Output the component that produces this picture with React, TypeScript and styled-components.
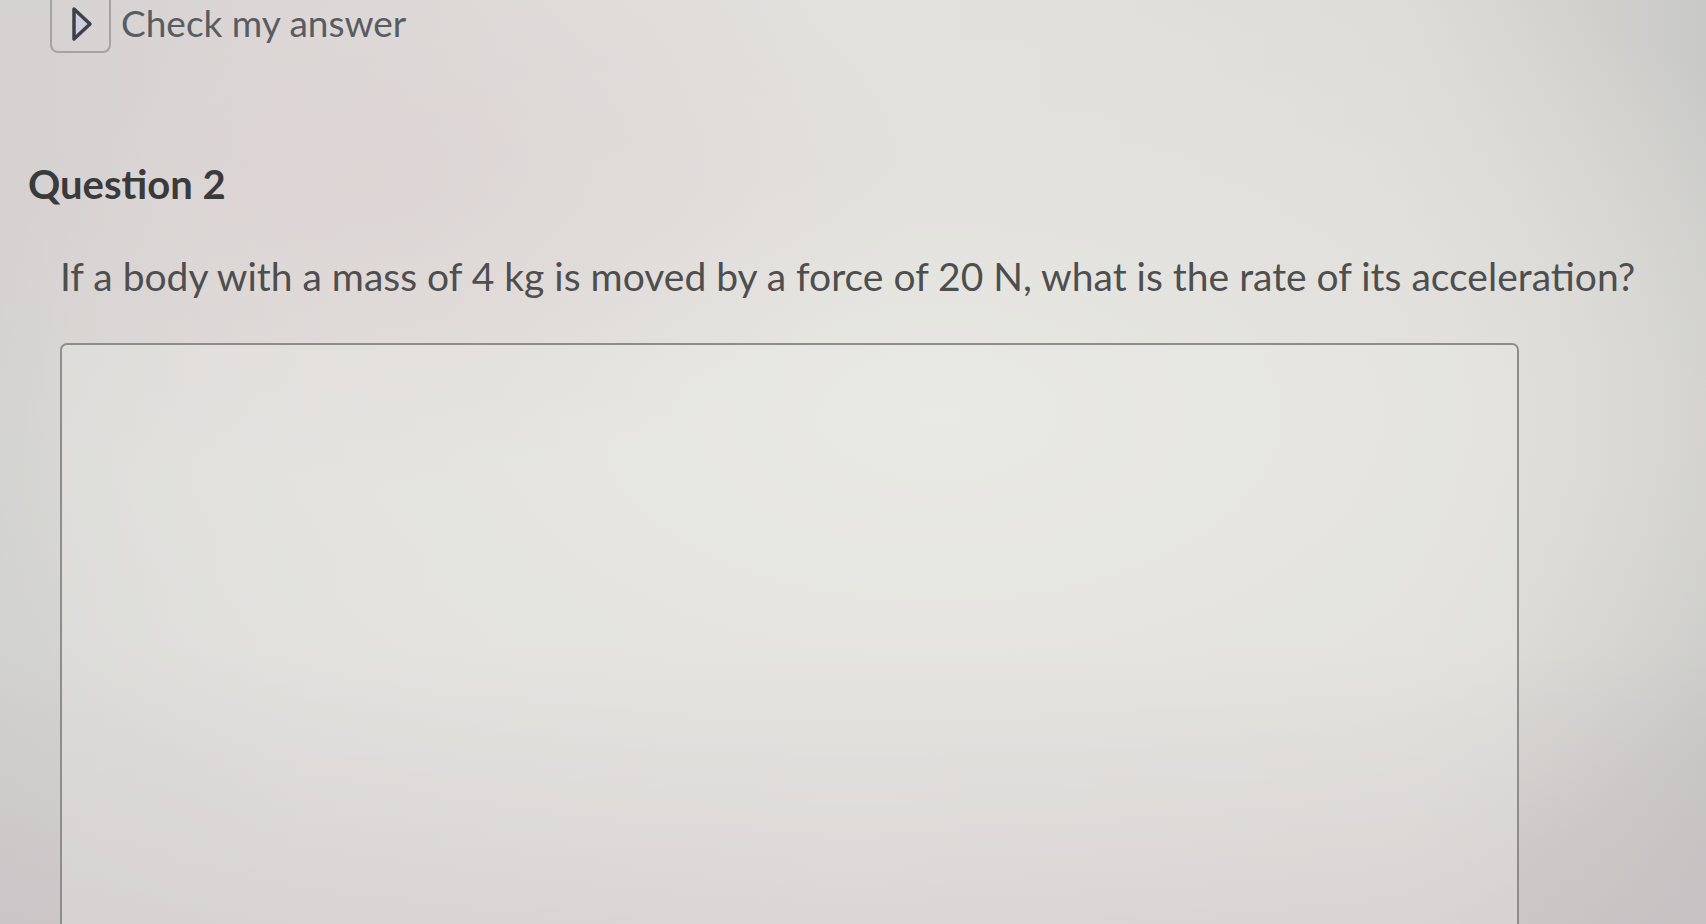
import * as React from "react";
import styled, { createGlobalStyle } from "styled-components";

const GlobalStyle = createGlobalStyle`
  html, body {
    margin: 0;
    padding: 0;
    height: 100%;
  }
  body {
    font-family: Lato, "Noto Sans", "Liberation Sans", sans-serif;
    overflow: hidden;
  }
`;

const Page = styled.div`
  height: 924px;
  overflow: hidden;
  box-sizing: border-box;
  padding-left: 28px;
  display: flex;
  flex-direction: column;
  background:
    linear-gradient(180deg, rgba(226, 222, 220, 0) 0%, rgba(226, 222, 220, 0) 70%, rgba(196, 186, 190, 0.55) 100%),
    radial-gradient(ellipse at 20% 18%, rgba(220, 208, 210, 0.7) 0%, rgba(220, 208, 210, 0) 30%),
    radial-gradient(ellipse at 55% 45%, #e8e8e3 0%, #e2e1dd 35%, rgba(214, 212, 209, 0) 75%),
    linear-gradient(90deg, #d2d2d0 0%, #dcdad8 18%, #e3e2de 50%, #dddbd7 82%, #c9c9c7 100%);
`;

const TopRow = styled.div`
  display: flex;
  align-items: flex-start;
  gap: 10px;
  margin-left: 22px;
`;

const ToggleButton = styled.button`
  box-sizing: border-box;
  width: 61px;
  height: 70px;
  margin-top: -17px;
  padding: 11px 0 0 2px;
  display: flex;
  align-items: center;
  justify-content: center;
  background: transparent;
  border: 2px solid #a3a3a3;
  border-radius: 8px;
  cursor: pointer;
`;

const ToggleLabel = styled.span`
  font-size: 37px;
  line-height: 44px;
  padding-top: 1px;
  color: #585c61;
`;

const QuestionTitle = styled.h2`
  margin: 107px 0 0 0;
  font-size: 40px;
  line-height: 48px;
  font-weight: 700;
  color: #3a3a3a;
`;

const QuestionText = styled.p`
  margin: 45px 0 0 32px;
  font-size: 39px;
  line-height: 47px;
  color: #4e4e4e;
  white-space: nowrap;
`;

const AnswerBox = styled.div`
  box-sizing: border-box;
  margin: 43px 0 0 32px;
  width: 1459px;
  height: 700px;
  flex-shrink: 0;
  border: 2px solid #8d8d8b;
  border-radius: 7px;
  background: rgba(236, 236, 231, 0.35);
`;

const PlayIcon: React.FC = () => (
  <svg width="24" height="36" viewBox="0 0 24 36" aria-hidden="true">
    <polygon
      points="4,3 20,18 4,33"
      fill="#cdd0dc"
      stroke="#3d404a"
      strokeWidth="3.5"
      strokeLinejoin="round"
    />
  </svg>
);

export default function App() {
  return (
    <>
      <GlobalStyle />
      <Page>
        <TopRow>
          <ToggleButton aria-label="Check my answer">
            <PlayIcon />
          </ToggleButton>
          <ToggleLabel>Check my answer</ToggleLabel>
        </TopRow>
        <QuestionTitle>Question 2</QuestionTitle>
        <QuestionText>
          If a body with a mass of 4 kg is moved by a force of 20 N, what is the rate of its acceleration?
        </QuestionText>
        <AnswerBox />
      </Page>
    </>
  );
}
